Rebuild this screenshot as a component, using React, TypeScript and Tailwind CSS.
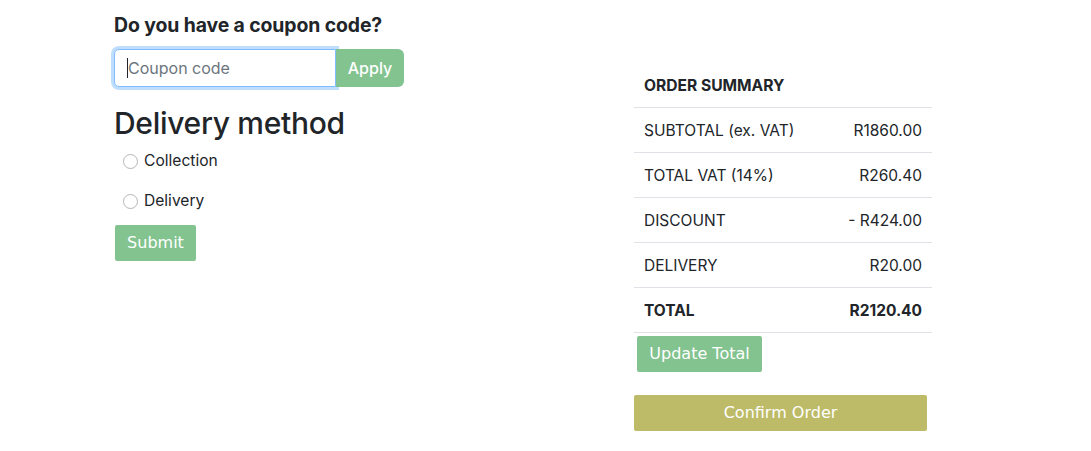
import React from "react";

export default function App() {
  const rows: [string, string, boolean][] = [
    ["SUBTOTAL (ex. VAT)", "R1860.00", false],
    ["TOTAL VAT (14%)", "R260.40", false],
    ["DISCOUNT", "- R424.00", false],
    ["DELIVERY", "R20.00", false],
    ["TOTAL", "R2120.40", true],
  ];
  return (
    <div className="w-[1091px] h-[451px] bg-white text-[#212529] flex pl-[114px]" style={{ fontFamily: "Inter, 'Noto Sans', sans-serif" }}>
      <div className="w-[520px] flex flex-col pt-[13px]">
        <h5 className="text-[19.4px] font-bold leading-[24px] tracking-[-0.1px]">Do you have a coupon code?</h5>
        <div className="flex mt-[12px] h-[38px]">
          <div className="w-[222px] h-[38px] rounded-l-[5px] border border-[#80bdff] shadow-[0_0_0_3px_rgba(0,123,255,0.25)] flex items-center pl-[12px] bg-white">
            <span className="w-px h-[20px] bg-[#212529]"></span>
            <span className="text-[16px] text-[#6c757d]">Coupon code</span>
          </div>
          <div className="w-[68px] h-[38px] rounded-r-[6px] bg-[#82c38f] text-white text-[16px] font-medium flex items-center justify-center">Apply</div>
        </div>
        <h2 className="text-[30px] font-medium leading-[38px] mt-[17px] tracking-[-0.3px]">Delivery method</h2>
        <div className="flex flex-col pl-[9px] mt-[7px]">
          <label className="flex items-center h-[24px] gap-[6px] text-[15.6px]">
            <span className="w-[15px] h-[15px] rounded-full border border-[#b5b5b5] bg-white"></span>
            Collection
          </label>
          <label className="flex items-center h-[24px] gap-[6px] text-[15.6px] mt-[16px]">
            <span className="w-[15px] h-[15px] rounded-full border border-[#b5b5b5] bg-white"></span>
            Delivery
          </label>
        </div>
        <div className="mt-[12px] ml-px w-[81px] h-[36px] rounded-[2px] bg-[#82c38f] text-white text-[16px] flex items-center justify-center" style={{ fontFamily: "'DejaVu Sans', Verdana, sans-serif" }}>Submit</div>
      </div>
      <div className="w-[298px] flex flex-col pt-[63px]">
        <div className="h-[45px] border-b border-[#dee2e6] flex items-center px-[10px] pt-[2px] text-[15.6px] font-bold">ORDER SUMMARY</div>
        {rows.map(([k, v, b]) => (
          <div key={k} className={"h-[45px] border-b border-[#dee2e6] flex items-center justify-between px-[10px] pt-[2px] text-[15.5px] " + (b ? "font-bold" : "")}>
            <span>{k}</span>
            <span>{v}</span>
          </div>
        ))}
        <div className="mt-[3px] ml-[3px] w-[125px] h-[36px] rounded-[2px] bg-[#82c38f] text-white text-[16px] flex items-center justify-center" style={{ fontFamily: "'DejaVu Sans', Verdana, sans-serif" }}>Update Total</div>
        <div className="mt-[23px] w-[293px] h-[36px] rounded-[2px] bg-[#bdbb67] text-white text-[16px] flex items-center justify-center" style={{ fontFamily: "'DejaVu Sans', Verdana, sans-serif" }}>Confirm Order</div>
      </div>
    </div>
  );
}
